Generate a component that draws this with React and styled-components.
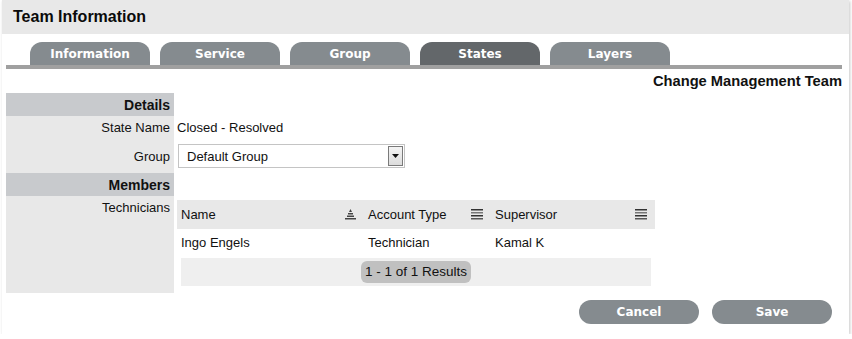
import React from 'react';
import styled, { createGlobalStyle } from 'styled-components';

const GlobalStyle = createGlobalStyle`
  body {
    margin: 0;
    background: #fff;
    font-family: "Liberation Sans", Arial, sans-serif;
    font-size: 13px;
    color: #111;
  }
`;

const Card = styled.div`
  margin-left: 2px;
  width: 847px;
  height: 334px;
  background: #fff;
  box-shadow: 1px 1px 3px rgba(0, 0, 0, 0.22);
  display: flex;
  flex-direction: column;
`;

const Header = styled.div`
  height: 34px;
  background: #e8e8e8;
  display: flex;
  align-items: center;
  padding-left: 11px;
  font-size: 16px;
  font-weight: bold;
  color: #0a0a0a;
`;

const TabBar = styled.div`
  margin: 8px 7px 0 4px;
  padding-left: 24px;
  display: flex;
  gap: 10px;
  border-bottom: 4px solid #a0a0a0;
`;

const Tab = styled.div`
  width: 120px;
  height: 23px;
  border-radius: 12px 12px 0 0;
  background: ${(p) => (p.active ? '#63676a' : '#858b8f')};
  color: #fff;
  font-family: "DejaVu Sans", Verdana, sans-serif;
  font-size: 12px;
  font-weight: bold;
  display: flex;
  align-items: center;
  justify-content: center;
  padding-top: 1px;
  box-sizing: border-box;
`;

const TeamName = styled.div`
  height: 24px;
  display: flex;
  align-items: center;
  justify-content: flex-end;
  padding-right: 7px;
  font-weight: bold;
  font-size: 14.7px;
`;

const Form = styled.div`
  margin-left: 4px;
  display: grid;
  grid-template-columns: 168px 1fr;
`;

const Label = styled.div`
  background: ${(p) => (p.section ? '#c8cacd' : '#e8e8e8')};
  font-weight: ${(p) => (p.section ? 'bold' : 'normal')};
  font-size: ${(p) => (p.section ? '14px' : '13px')};
  height: ${(p) => p.h}px;
  box-sizing: border-box;
  display: flex;
  justify-content: flex-end;
  align-items: ${(p) => (p.top ? 'flex-start' : 'center')};
  padding: ${(p) => (p.top ? '4px 4px 0 0' : '0 4px 0 0')};
`;

const Value = styled.div`
  height: ${(p) => p.h}px;
  display: flex;
  align-items: center;
  padding-left: ${(p) => p.pl || 3}px;
  box-sizing: border-box;
`;

const Select = styled.div`
  width: 227px;
  height: 24px;
  border: 1px solid #c4c4c4;
  box-sizing: border-box;
  display: flex;
  align-items: center;
  padding-left: 8px;
`;

const SelectText = styled.span`
  flex: 1;
`;

const ArrowBox = styled.div`
  width: 15px;
  height: 20px;
  margin-right: 1px;
  border: 1px solid #7a7a7a;
  box-sizing: border-box;
  background: linear-gradient(#f4f4f4, #dcdcdc);
  display: flex;
  align-items: center;
  justify-content: center;
`;

const TableWrap = styled.div`
  align-self: start;
  margin-top: 4px;
  margin-left: 3px;
  width: 478px;
`;

const Row = styled.div`
  display: grid;
  grid-template-columns: 187px 127px 164px;
  height: ${(p) => p.h}px;
  background: ${(p) => p.bg || 'transparent'};
`;

const Cell = styled.div`
  display: flex;
  align-items: center;
  justify-content: space-between;
  padding: 0 8px 0 4px;
`;

const Footer = styled.div`
  margin: 2px 4px 0;
  height: 28px;
  background: #efefef;
  display: flex;
  align-items: center;
  justify-content: center;
`;

const Pager = styled.div`
  background: #c0c0c0;
  border-radius: 6px;
  padding: 3px 4px 4px;
  font-size: 13.5px;
`;

const Actions = styled.div`
  display: flex;
  justify-content: flex-end;
  gap: 13px;
  padding: 7px 17px 0 0;
`;

const Button = styled.button`
  width: 120px;
  height: 24px;
  border: none;
  border-radius: 12px;
  background: #858b8f;
  color: #fff;
  font-family: "DejaVu Sans", Verdana, sans-serif;
  font-size: 12px;
  font-weight: bold;
  cursor: pointer;
`;

const SortIcon = () => (
  <svg width="11" height="11" viewBox="0 0 11 11">
    <polygon points="5.5,0 7,3 4,3" fill="#444" />
    <rect x="3" y="4" width="5" height="1.5" fill="#444" />
    <rect x="2" y="6.5" width="7" height="1.5" fill="#444" />
    <rect x="0" y="9" width="11" height="1.5" fill="#444" />
  </svg>
);

const ListIcon = () => (
  <svg width="12" height="11" viewBox="0 0 12 11">
    <rect x="0" y="0" width="12" height="1.5" fill="#333" />
    <rect x="0" y="3" width="12" height="1.5" fill="#777" />
    <rect x="0" y="6" width="12" height="1.5" fill="#333" />
    <rect x="0" y="9" width="12" height="1.5" fill="#555" />
  </svg>
);

const tabs = ['Information', 'Service', 'Group', 'States', 'Layers'];

export default function App() {
  return (
    <>
      <GlobalStyle />
      <Card>
        <Header>Team Information</Header>
        <TabBar>
          {tabs.map((t) => (
            <Tab key={t} active={t === 'States'}>
              {t}
            </Tab>
          ))}
        </TabBar>
        <TeamName>Change Management Team</TeamName>
        <Form>
          <Label section h={23}>Details</Label>
          <Value h={23} />
          <Label h={23}>State Name</Label>
          <Value h={23} pl={3}>Closed - Resolved</Value>
          <Label h={34}>Group</Label>
          <Value h={34} pl={4}>
            <Select>
              <SelectText>Default Group</SelectText>
              <ArrowBox>
                <svg width="7" height="4" viewBox="0 0 7 4">
                  <polygon points="0,0 7,0 3.5,4" fill="#111" />
                </svg>
              </ArrowBox>
            </Select>
          </Value>
          <Label section h={23}>Members</Label>
          <Value h={23} />
          <Label top h={97}>Technicians</Label>
          <TableWrap>
            <Row h={29} bg="#e8e8e8">
              <Cell>
                Name
                <SortIcon />
              </Cell>
              <Cell>
                Account Type
                <ListIcon />
              </Cell>
              <Cell>
                Supervisor
                <ListIcon />
              </Cell>
            </Row>
            <Row h={27}>
              <Cell>Ingo Engels</Cell>
              <Cell>Technician</Cell>
              <Cell>Kamal K</Cell>
            </Row>
            <Footer>
              <Pager>1 - 1 of 1 Results</Pager>
            </Footer>
          </TableWrap>
        </Form>
        <Actions>
          <Button>Cancel</Button>
          <Button>Save</Button>
        </Actions>
      </Card>
    </>
  );
}
